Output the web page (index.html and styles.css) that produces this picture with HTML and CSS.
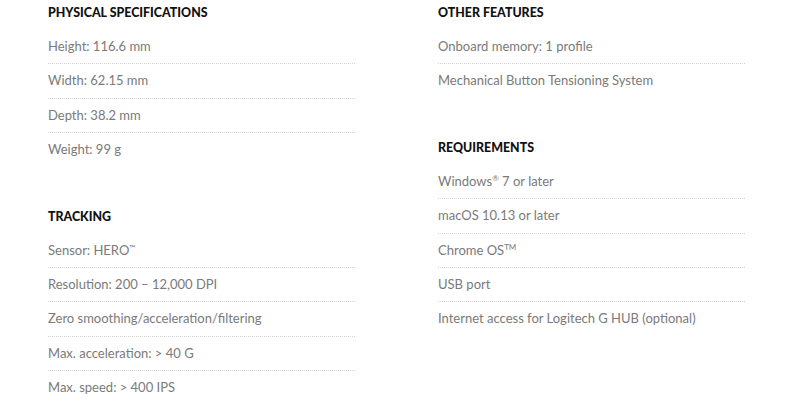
FILE: index.html
```html
<!DOCTYPE html>
<html lang="en">
<head>
<meta charset="utf-8">
<title>Specifications</title>
<link rel="stylesheet" href="styles.css">
</head>
<body>
<div class="specs">
  <div class="col">
    <section class="group">
      <h3 class="title">PHYSICAL SPECIFICATIONS</h3>
      <ul class="list">
        <li>Height: 116.6 mm</li>
        <li>Width: 62.15 mm</li>
        <li>Depth: 38.2 mm</li>
        <li>Weight: 99 g</li>
      </ul>
    </section>
    <section class="group">
      <h3 class="title">TRACKING</h3>
      <ul class="list">
        <li>Sensor: HERO<span class="tm">™</span></li>
        <li>Resolution: 200 – 12,000 DPI</li>
        <li>Zero smoothing/acceleration/filtering</li>
        <li>Max. acceleration: &gt; 40 G</li>
        <li>Max. speed: &gt; 400 IPS</li>
      </ul>
    </section>
  </div>
  <div class="col">
    <section class="group">
      <h3 class="title">OTHER FEATURES</h3>
      <ul class="list">
        <li>Onboard memory: 1 profile</li>
        <li>Mechanical Button Tensioning System</li>
      </ul>
    </section>
    <section class="group">
      <h3 class="title">REQUIREMENTS</h3>
      <ul class="list">
        <li>Windows<sup class="sup">®</sup> 7 or later</li>
        <li>macOS 10.13 or later</li>
        <li>Chrome OS<sup class="sup">TM</sup></li>
        <li>USB port</li>
        <li>Internet access for Logitech G HUB (optional)</li>
      </ul>
    </section>
  </div>
</div>
</body>
</html>
```

FILE: styles.css
```css
html, body {
  margin: 0;
  padding: 0;
  background: #ffffff;
  overflow: hidden;
}

body {
  font-family: Lato, "Open Sans", sans-serif;
  color: #7a7a7a;
}

.specs {
  display: grid;
  grid-template-columns: 307px 307px;
  column-gap: 83px;
  padding-left: 48px;
  height: 400px;
  overflow: hidden;
}

.group {
  margin-bottom: 41px;
}

.group:last-child {
  margin-bottom: 0;
}

.title {
  margin: 4px 0 8px;
  font-size: 12.4px;
  line-height: 18px;
  font-weight: 900;
  color: #111111;
}

.list {
  list-style: none;
  margin: 0;
  padding: 0;
}

.list li {
  padding: 8px 0;
  font-size: 13px;
  line-height: 17.4px;
  border-bottom: 1px dotted #d2d2d2;
}

.list li:last-child {
  border-bottom: none;
}

.tm {
  font-size: 8px;
  vertical-align: 4px;
  line-height: 0;
}

.sup {
  font-size: 8px;
  vertical-align: 5px;
  line-height: 0;
}
```
